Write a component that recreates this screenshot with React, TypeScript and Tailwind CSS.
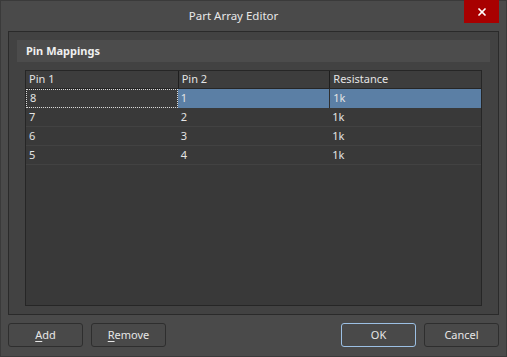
import { X } from 'lucide-react'

const rows = [
  ['8', '1', '1k'],
  ['7', '2', '1k'],
  ['6', '3', '1k'],
  ['5', '4', '1k'],
]

function Button({ label, hot, primary }: { label: string; hot?: number; primary?: boolean }) {
  return (
    <button
      className={
        'h-[24px] w-[75px] rounded-[3px] border bg-[#494949] text-[11px] text-[#e6e6e6] ' +
        (primary ? 'border-[#9cc0e4]' : 'border-[#2e2e2e]')
      }
    >
      {hot === undefined ? (
        label
      ) : (
        <>
          <span className="underline underline-offset-2">{label[hot]}</span>
          {label.slice(hot + 1)}
        </>
      )}
    </button>
  )
}

export default function App() {
  return (
    <div
      className="flex h-[357px] w-[507px] flex-col border border-[#3a3a3a] bg-[#4a4a4a] text-[#e4e4e4]"
      style={{ fontFamily: '"Noto Sans", "Open Sans", sans-serif' }}
    >
      <div className="relative flex h-[30px] shrink-0 items-center justify-center pr-[40px]">
        <span className="text-[11.5px] text-[#e8e8e8]">Part Array Editor</span>
        <div className="absolute right-[7px] top-[-1px] flex h-[23px] w-[35px] items-center justify-center bg-[#a80000]">
          <X className="h-[12px] w-[12px] text-white" strokeWidth={3.5} />
        </div>
      </div>

      <div className="mx-[7px] flex h-[284px] flex-col border border-[#2a2a2a] bg-[#424242] p-[8px]">
        <div className="flex h-[22px] shrink-0 items-center bg-[#4c4c4c] px-[9px] text-[11px] font-bold text-[#f0f0f0]">
          Pin Mappings
        </div>
        <div className="mx-[8px] mt-[8px] flex flex-1 flex-col border border-[#262626] bg-[#393939] text-[11px]">
          <div className="grid h-[18px] grid-cols-3 border-b border-[#262626] bg-[#3d3d3d]">
            <div className="flex items-center px-[3px]">Pin 1</div>
            <div className="flex items-center border-l border-[#1e1e1e] px-[3px]">Pin 2</div>
            <div className="flex items-center border-l border-[#1e1e1e] px-[3px]">Resistance</div>
          </div>
          {rows.map((r, i) => (
            <div key={i} className="grid h-[19px] grid-cols-3 border-b border-[#424242]">
              <div
                className={
                  'flex items-center px-[3px] ' +
                  (i === 0 ? 'border border-dotted border-[#d8d8d8]' : '')
                }
              >
                {r[0]}
              </div>
              <div className={'flex items-center px-[3px] ' + (i === 0 ? 'bg-[#5b7fa5]' : '')}>{r[1]}</div>
              <div className={'flex items-center px-[3px] ' + (i === 0 ? 'border-l border-[#2f2f2f] bg-[#5b7fa5]' : '')}>
                {r[2]}
              </div>
            </div>
          ))}
        </div>
      </div>

      <div className="mx-[7px] mt-[8px] flex gap-[8px]">
        <Button label="Add" hot={0} />
        <Button label="Remove" hot={0} />
        <div className="flex-1" />
        <Button label="OK" primary />
        <Button label="Cancel" />
      </div>
    </div>
  )
}
